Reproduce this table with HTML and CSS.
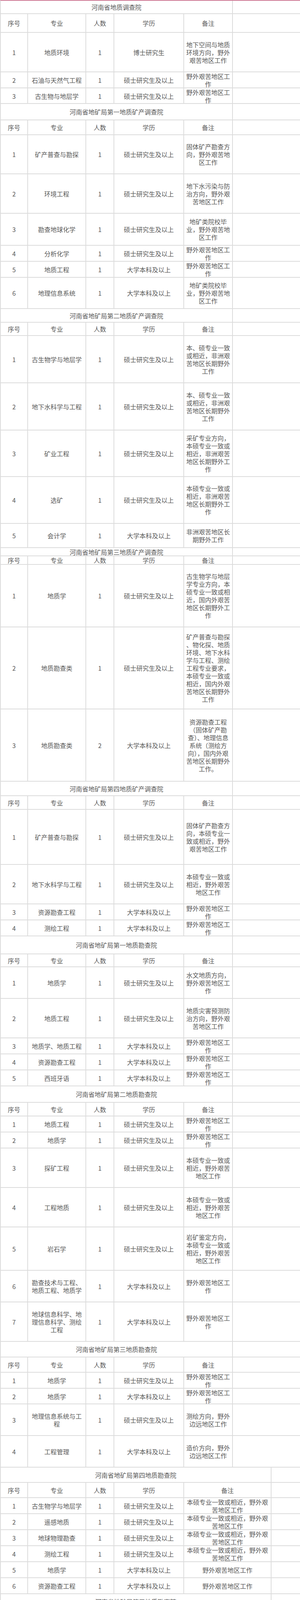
FILE: index.html
```html
<!DOCTYPE html>
<html lang="zh-CN">
<head>
<meta charset="utf-8">
<title>河南省地矿局招聘岗位</title>
<link rel="stylesheet" href="styles.css">
</head>
<body>
<div class="sheet">

<div class="row a h34"><div class="t">河南省地质调查院</div><div></div></div>
<div class="row a h48"><div>序号</div><div>专业</div><div>人数</div><div>学历</div><div>备注</div><div></div></div>
<div class="row a h101"><div>1</div><div>地质环境</div><div>1</div><div>博士研究生</div><div><span>地下空间与地质<br>环境方向，野外<br>艰苦地区工作</span></div><div></div></div>
<div class="row a h41"><div>2</div><div>石油与天然气工程</div><div>1</div><div>硕士研究生及以上</div><div><span>野外艰苦地区工<br>作</span></div><div></div></div>
<div class="row a h40"><div>3</div><div>古生物与地层学</div><div>1</div><div>硕士研究生及以上</div><div><span>野外艰苦地区工<br>作</span></div><div></div></div>

<div class="row a h42"><div class="t">河南省地矿局第一地质矿产调查院</div><div></div></div>
<div class="row a h38"><div>序号</div><div>专业</div><div>人数</div><div>学历</div><div>备注</div><div></div></div>
<div class="row a h100"><div>1</div><div>矿产普查与勘探</div><div>1</div><div>硕士研究生及以上</div><div><span>固体矿产勘查方<br>向，野外艰苦地<br>区工作</span></div><div></div></div>
<div class="row a h101"><div>2</div><div>环境工程</div><div>1</div><div>硕士研究生及以上</div><div><span>地下水污染与防<br>治方向，野外艰<br>苦地区工作</span></div><div></div></div>
<div class="row a h82"><div>3</div><div>勘查地球化学</div><div>1</div><div>硕士研究生及以上</div><div><span>地矿类院校毕<br>业，野外艰苦地<br>区工作</span></div><div></div></div>
<div class="row a h41"><div>4</div><div>分析化学</div><div>1</div><div>硕士研究生及以上</div><div><span>野外艰苦地区工<br>作</span></div><div></div></div>
<div class="row a h41"><div>5</div><div>地质工程</div><div>1</div><div>大学本科及以上</div><div><span>野外艰苦地区工<br>作</span></div><div></div></div>
<div class="row a h80"><div>6</div><div>地理信息系统</div><div>1</div><div>大学本科及以上</div><div><span>地矿类院校毕<br>业，野外艰苦地<br>区工作</span></div><div></div></div>

<div class="row a h35"><div class="t">河南省地矿局第二地质矿产调查院</div><div></div></div>
<div class="row a h34"><div>序号</div><div>专业</div><div>人数</div><div>学历</div><div>备注</div><div></div></div>
<div class="row a h121"><div>1</div><div>古生物学与地层学</div><div>1</div><div>硕士研究生及以上</div><div><span>本、硕专业一致<br>或相近，非洲艰<br>苦地区长期野外<br>工作</span></div><div></div></div>
<div class="row a h121"><div>2</div><div>地下水科学与工程</div><div>1</div><div>硕士研究生及以上</div><div><span>本、硕专业一致<br>或相近，非洲艰<br>苦地区长期野外<br>工作</span></div><div></div></div>
<div class="row a h119"><div>3</div><div>矿业工程</div><div>1</div><div>硕士研究生及以上</div><div><span>采矿专业方向，<br>本硕专业一致或<br>相近，非洲艰苦<br>地区长期野外工<br>作</span></div><div></div></div>
<div class="row a h120"><div>4</div><div>选矿</div><div>1</div><div>硕士研究生及以上</div><div><span>本硕专业一致或<br>相近，非洲艰苦<br>地区长期野外工<br>作</span></div><div></div></div>
<div class="row a h62"><div>5</div><div>会计学</div><div>1</div><div>大学本科及以上</div><div><span>非洲艰苦地区长<br>期野外工作</span></div><div></div></div>

<div class="row a h21"><div class="t">河南省地矿局第三地质矿产调查院</div><div></div></div>
<div class="row a h22"><div>序号</div><div>专业</div><div>人数</div><div>学历</div><div>备注</div><div></div></div>
<div class="row a h160"><div>1</div><div>地质学</div><div>1</div><div>硕士研究生及以上</div><div><span>古生物学与地层<br>学专业方向，本<br>硕专业一致或相<br>近，国内外艰苦<br>地区长期野外工<br>作</span></div><div></div></div>
<div class="row a h210"><div>2</div><div>地质勘查类</div><div>1</div><div>硕士研究生及以上</div><div><span>矿产普查与勘探<br>、物化探、地质<br>环境、地下水科<br>学与工程、测绘<br>工程专业要求，<br>本硕专业一致或<br>相近，国内外艰<br>苦地区长期野外<br>工作</span></div><div></div></div>
<div class="row a h185"><div>3</div><div>地质勘查类</div><div>2</div><div>大学本科及以上</div><div><span>资源勘查工程<br>（固体矿产勘<br>查）、地理信息<br>系统（测绘方<br>向），国内外艰<br>苦地区长期野外<br>工作。</span></div><div></div></div>

<div class="row a h37"><div class="t">河南省地矿局第四地质矿产调查院</div><div></div></div>
<div class="row a h35"><div>序号</div><div>专业</div><div>人数</div><div>学历</div><div>备注</div><div></div></div>
<div class="row a h141"><div>1</div><div>矿产普查与勘探</div><div>1</div><div>硕士研究生及以上</div><div><span>固体矿产勘查方<br>向，本硕专业一<br>致或相近，野外<br>艰苦地区工作</span></div><div></div></div>
<div class="row a h101"><div>2</div><div>地下水科学与工程</div><div>1</div><div>硕士研究生及以上</div><div><span>本硕专业一致或<br>相近，野外艰苦<br>地区工作</span></div><div></div></div>
<div class="row a h41"><div>3</div><div>资源勘查工程</div><div>1</div><div>大学本科及以上</div><div><span>野外艰苦地区工<br>作</span></div><div></div></div>
<div class="row a h41"><div>4</div><div>测绘工程</div><div>1</div><div>大学本科及以上</div><div><span>野外艰苦地区工<br>作</span></div><div></div></div>

<div class="row a h46"><div class="t">河南省地矿局第一地质勘查院</div><div></div></div>
<div class="row a h33"><div>序号</div><div>专业</div><div>人数</div><div>学历</div><div>备注</div><div></div></div>
<div class="row a h81"><div>1</div><div>地质学</div><div>1</div><div>硕士研究生及以上</div><div><span>水文地质方向，<br>野外艰苦地区工<br>作</span></div><div></div></div>
<div class="row a h101"><div>2</div><div>地质工程</div><div>1</div><div>硕士研究生及以上</div><div><span>地质灾害预测防<br>治方向，野外艰<br>苦地区工作</span></div><div></div></div>
<div class="row a h41"><div>3</div><div>地质学、地质工程</div><div>1</div><div>大学本科及以上</div><div><span>野外艰苦地区工<br>作</span></div><div></div></div>
<div class="row a h41"><div>4</div><div>资源勘查工程</div><div>1</div><div>大学本科及以上</div><div><span>野外艰苦地区工<br>作</span></div><div></div></div>
<div class="row a h41"><div>5</div><div>西班牙语</div><div>1</div><div>大学本科及以上</div><div><span>野外艰苦地区工<br>作</span></div><div></div></div>

<div class="row a h42"><div class="t">河南省地矿局第二地质勘查院</div><div></div></div>
<div class="row a h35"><div>序号</div><div>专业</div><div>人数</div><div>学历</div><div>备注</div><div></div></div>
<div class="row a h41"><div>1</div><div>地质工程</div><div>1</div><div>硕士研究生及以上</div><div><span>野外艰苦地区工<br>作</span></div><div></div></div>
<div class="row a h41"><div>2</div><div>地质学</div><div>1</div><div>硕士研究生及以上</div><div><span>野外艰苦地区工<br>作</span></div><div></div></div>
<div class="row a h101"><div>3</div><div>探矿工程</div><div>1</div><div>硕士研究生及以上</div><div><span>本硕专业一致或<br>相近，野外艰苦<br>地区工作</span></div><div></div></div>
<div class="row a h101"><div>4</div><div>工程地质</div><div>1</div><div>硕士研究生及以上</div><div><span>本硕专业一致或<br>相近，野外艰苦<br>地区工作</span></div><div></div></div>
<div class="row a h111"><div>5</div><div>岩石学</div><div>1</div><div>硕士研究生及以上</div><div><span>岩矿鉴定方向，<br>本硕专业一致或<br>相近，野外艰苦<br>地区工作</span></div><div></div></div>
<div class="row a h81"><div>6</div><div><span>勘查技术与工程、<br>地质工程、地质学</span></div><div>1</div><div>大学本科及以上</div><div><span>野外艰苦地区工<br>作</span></div><div></div></div>
<div class="row a h101"><div>7</div><div><span>地球信息科学、地<br>理信息科学、测绘<br>工程</span></div><div>1</div><div>大学本科及以上</div><div><span>野外艰苦地区工<br>作</span></div><div></div></div>

<div class="row a h40"><div class="t">河南省地矿局第三地质勘查院</div><div></div></div>
<div class="row a h39"><div>序号</div><div>专业</div><div>人数</div><div>学历</div><div>备注</div><div></div></div>
<div class="row a h41"><div>1</div><div>地质学</div><div>1</div><div>硕士研究生及以上</div><div><span>野外艰苦地区工<br>作</span></div><div></div></div>
<div class="row a h40"><div>2</div><div>地质学</div><div>1</div><div>大学本科及以上</div><div><span>野外艰苦地区工<br>作</span></div><div></div></div>
<div class="row a h81"><div>3</div><div><span>地理信息系统与工<br>程</span></div><div>1</div><div>硕士研究生及以上</div><div><span>测绘方向，野外<br>边远地区工作</span></div><div></div></div>
<div class="row a h81"><div>4</div><div>工程管理</div><div>1</div><div>大学本科及以上</div><div><span>造价方向，野外<br>边远地区工作</span></div><div></div></div>

<div class="row b h39"><div class="t">河南省地矿局第四地质勘查院</div><div></div></div>
<div class="row b h39"><div>序号</div><div>专业</div><div>人数</div><div>学历</div><div>备注</div><div></div></div>
<div class="row b h41"><div>1</div><div>古生物学与地层学</div><div>1</div><div>硕士研究生及以上</div><div><span>本硕专业一致或相近，野外艰<br>苦地区工作</span></div><div></div></div>
<div class="row b h41"><div>2</div><div>遥感地质</div><div>1</div><div>硕士研究生及以上</div><div><span>本硕专业一致或相近，野外艰<br>苦地区工作</span></div><div></div></div>
<div class="row b h41"><div>3</div><div>地球物理勘查</div><div>1</div><div>硕士研究生及以上</div><div><span>本硕专业一致或相近，野外艰<br>苦地区工作</span></div><div></div></div>
<div class="row b h41"><div>4</div><div>测绘工程</div><div>1</div><div>硕士研究生及以上</div><div><span>本硕专业一致或相近，野外艰<br>苦地区工作</span></div><div></div></div>
<div class="row b h41"><div>5</div><div>地质学</div><div>1</div><div>大学本科及以上</div><div>野外艰苦地区工作</div><div></div></div>
<div class="row b h41"><div>6</div><div>资源勘查工程</div><div>1</div><div>大学本科及以上</div><div>野外艰苦地区工作</div><div></div></div>

<div class="row b h39"><div class="t">河南省地矿局第五地质勘查院</div><div></div></div>
<div class="row b h40"><div>序号</div><div>专业</div><div>人数</div><div>学历</div><div>备注</div><div></div></div>
<div class="row b h82"><div>1</div><div><span>地球探测与信息技<br>术</span></div><div>1</div><div>硕士研究生及以上</div><div><span>电法勘探方向，本硕专业一致<br>或相近，野外艰苦地区工作</span></div><div></div></div>
<div class="row b h74"><div>2</div><div>测绘工程</div><div>1</div><div>硕士研究生及以上</div><div><span>矿区开采沉陷与土地复垦方<br>向，野外艰苦地区工作</span></div><div></div></div>
<div class="row b h128"><div>3</div><div>矿物加工工程</div><div>1</div><div>硕士研究生及以上</div><div><span>矿产综合利用方向或矿物加工<br>理论、工艺与设备方向，本硕<br>专业一致或相近，长期非洲尼<br>日利亚矿区工作</span></div><div></div></div>
<div class="row b h50"><div>4</div><div>地下水科学与工程</div><div>1</div><div>大学本科及以上</div><div>长期非洲尼日利亚矿区工作</div><div></div></div>
<div class="row b h72"><div>5</div><div>会计学</div><div>1</div><div>大学本科及以上</div><div><span>具有会计从业资格证，长期非<br>洲尼日利亚矿区工作</span></div><div></div></div>
<div class="row b h40"><div>6</div><div>汉语言文学</div><div>1</div><div>大学本科及以上</div><div>野外艰苦地区工作</div><div></div></div>

<div class="row b h35"><div class="t">河南省地矿局第一地质环境调查院</div><div></div></div>
<div class="row b h38"><div>序号</div><div>专业</div><div>人数</div><div>学历</div><div>备注</div><div></div></div>
<div class="row b h41"><div>1</div><div>地下水科学与工程</div><div>1</div><div>硕士研究生及以上</div><div><span>本、硕专业一致或相近，野外<br>艰苦地区工作</span></div><div></div></div>
<div class="row b h41"><div>2</div><div>古生物学与地层学</div><div>1</div><div>硕士研究生及以上</div><div>野外艰苦地区工作</div><div></div></div>
<div class="row b h41"><div>3</div><div>勘查技术与工程</div><div>1</div><div>大学本科及以上</div><div>野外艰苦地区工作</div><div></div></div>

<div class="row b h46"><div class="t">河南省地矿局第二地质环境调查院</div><div></div></div>
<div class="row b h41"><div>序号</div><div>专业</div><div>人数</div><div>学历</div><div>备注</div><div></div></div>
<div class="row b h67"><div>1</div><div>测绘工程</div><div>1</div><div>硕士研究生及以上</div><div><span>本、硕专业一致或相近，长期<br>野外边远艰苦地区工作</span></div><div></div></div>
<div class="row b h48"><div>2</div><div>地下水科学与工程</div><div>1</div><div>硕士研究生及以上</div><div><span>本、硕专业一致或相近，长期<br>野外边远艰苦地区工作</span></div><div></div></div>
<div class="row b h82"><div>3</div><div>水文地质学</div><div>1</div><div>硕士研究生及以上</div><div><span>地下水资源评价方向，本、硕<br>专业一致或相近，长期野外边<br>远艰苦地区工作</span></div><div></div></div>
<div class="row b h68"><div>4</div><div><span>环境工程与设计<br>(地学方向)</span></div><div>1</div><div>大学本科及以上</div><div>长期野外边远艰苦地区工作</div><div></div></div>
<div class="row b h40"><div>5</div><div>勘查技术与工程</div><div>1</div><div>大学本科及以上</div><div>长期野外边远艰苦地区工作</div><div></div></div>

<div class="row b h43"><div class="t">河南省地质科学研究所</div><div></div></div>
<div class="row b h37"><div>序号</div><div>专业</div><div>人数</div><div>学历</div><div>备注</div><div></div></div>
<div class="row b h40"><div>1</div><div>测绘工程</div><div>1</div><div>硕士研究生及以上</div><div>野外艰苦地区工作</div><div></div></div>

<div class="row b h46"><div class="t">河南省航空物探遥感中心</div><div></div></div>
<div class="row b h34"><div>序号</div><div>专业</div><div>人数</div><div>学历</div><div>备注</div><div></div></div>
<div class="row b h41"><div>1</div><div>物探、遥感、测绘</div><div>1</div><div>博士研究生</div><div>本硕博专业一致或相近</div><div></div></div>
<div class="row c h61"><div>2</div><div><span>地球物理、地球化<br>学</span></div><div>1</div><div>硕士研究生及以上</div><div>本硕专业一致或相近</div></div>
<div class="row c h40"><div>3</div><div>水利工程</div><div>1</div><div>硕士研究生及以上</div><div>矿山地质环境方向，本硕专业一致或相近</div></div>
<div class="row c h62"><div>4</div><div><span>地图学与地理信息<br>系统</span></div><div>1</div><div>硕士研究生及以上</div><div>本硕专业一致或相近</div></div>
<div class="row c h40"><div>5</div><div>测绘科学与技术</div><div>1</div><div>硕士研究生及以上</div><div>本硕专业一致或相近</div></div>
<div class="row c h41"><div>6</div><div>构造地质学</div><div>1</div><div>硕士研究生及以上</div><div>本硕专业一致或相近</div></div>
<div class="row c h42"><div>7</div><div>地质学、地质工程</div><div>1</div><div>大学本科及以上</div><div><span>长期野外艰苦地区工作，服务期不少于3<br>年</span></div></div>
<div class="row c h61"><div>8</div><div><span>地球信息科学与技<br>术</span></div><div>1</div><div>大学本科及以上</div><div><span>长期野外艰苦地区工作，服务期不少于3<br>年</span></div></div>

<div class="row c h46"><div class="t">河南省地矿局测绘地理信息院</div></div>
<div class="row c h44"><div>序号</div><div>专业</div><div>人数</div><div>学历</div><div>备注</div></div>
<div class="row c h41"><div>1</div><div>软件工程</div><div>1</div><div>博士研究生</div><div>软件开发方向，野外艰苦地区工作</div></div>
<div class="row c h41"><div>2</div><div>地质工程</div><div>1</div><div>硕士研究生及以上</div><div>野外艰苦地区工作</div></div>
<div class="row c h41"><div>3</div><div>环境科学</div><div>1</div><div>硕士研究生及以上</div><div>野外艰苦地区工作</div></div>
<div class="row c h56"><div>4</div><div>水文地质学</div><div>1</div><div>硕士研究生及以上</div><div><span>地下水流动及污染数值模拟技术方向，野<br>外艰苦地区工作</span></div></div>
<div class="row c h61"><div>5</div><div><span>地球信息科学与技<br>术</span></div><div>1</div><div>硕士研究生及以上</div><div>野外艰苦地区工作</div></div>
<div class="row c h120"><div>6</div><div><span>资源循环科学与工<br>程、地质工程、水<br>文与水资源工程</span></div><div>1</div><div>大学本科及以上</div><div>野外艰苦地区工作</div></div>

<div class="row c h39"><div class="t">河南省岩石矿物测试中心</div></div>
<div class="row c h36"><div>序号</div><div>专业</div><div>人数</div><div>学历</div><div>备注</div></div>
<div class="row c h87"><div>1</div><div>矿业工程</div><div>1</div><div>硕士研究生及以上</div><div><span>矿物加工工程方向、本硕专业一致或相<br>近，长期野外艰苦地区工作，服务期不少<br>于3年</span></div></div>
<div class="row c h54"><div>2</div><div>环境工程</div><div>1</div><div>硕士研究生及以上</div><div><span>本硕专业一致或相近，长期野外艰苦地区<br>工作，服务期不少于3年</span></div></div>
<div class="row c h41"><div>3</div><div>分析化学</div><div>1</div><div>大学本科及以上</div><div><span>长期野外艰苦地区工作，服务期不少于3<br>年</span></div></div>

<div class="row c h43"><div class="t">河南省地质环境勘查院</div></div>
<div class="row c h35"><div>序号</div><div>专业</div><div>人数</div><div>学历</div><div>备注</div></div>
<div class="row c h42"><div>1</div><div>地球化学勘查</div><div>1</div><div>博士研究生</div><div><span>长期野外艰苦地区工作，服务期不少于3<br>年</span></div></div>
<div class="row c h41"><div>2</div><div>城市规划设计</div><div>1</div><div>硕士研究生及以上</div><div><span>本科土地规划优先，长期野外艰苦地区工<br>作，服务期不少于3年</span></div></div>
<div class="row c h40"><div>3</div><div>测绘工程</div><div>1</div><div>硕士研究生及以上</div><div><span>本硕专业一致或相近，长期野外艰苦地区<br>工作，服务期不少于3年</span></div><span class="wm">微信号：</span></div>

</div>
</body>
</html>
```

FILE: styles.css
```css
html, body {
  margin: 0;
  padding: 0;
  background: #ffffff;
}

body {
  font-family: "Noto Sans CJK SC", "Noto Sans", "DejaVu Sans", sans-serif;
  font-size: 16px;
  line-height: 20px;
  color: #585858;
}

.sheet {
  width: 769px;
  box-sizing: border-box;
  border-top: 2px solid #cf7a96;
  border-left: 2px solid #dcdcdc;
}

.row {
  display: grid;
  box-sizing: border-box;
  border-bottom: 2px solid #dcdcdc;
  position: relative;
}

.a { grid-template-columns: 70px 149px 72px 179px 125px 1fr; }
.b { grid-template-columns: 70px 149px 72px 179px 224px 1fr; }
.c { grid-template-columns: 70px 149px 72px 179px 1fr; }

.row > div {
  display: flex;
  align-items: center;
  justify-content: center;
  text-align: center;
  white-space: nowrap;
  min-width: 0;
  padding: 0 3px;
  box-sizing: border-box;
  border-right: 2px solid #dcdcdc;
}

.row > div:last-of-type { border-right: 0; }

.a > .t, .b > .t { grid-column: 1 / 6; border-right: 2px solid #dcdcdc; }
.c > .t { grid-column: 1 / -1; }

.wm {
  position: absolute;
  left: 566px;
  top: 2px;
  font-size: 15px;
  color: rgba(120, 120, 120, 0.35);
  pointer-events: none;
}

.h21 { height: 21px; }
.h22 { height: 22px; }
.h33 { height: 33px; }
.h34 { height: 34px; }
.h35 { height: 35px; }
.h36 { height: 36px; }
.h37 { height: 37px; }
.h38 { height: 38px; }
.h39 { height: 39px; }
.h40 { height: 40px; }
.h41 { height: 41px; }
.h42 { height: 42px; }
.h43 { height: 43px; }
.h44 { height: 44px; }
.h46 { height: 46px; }
.h48 { height: 48px; }
.h50 { height: 50px; }
.h54 { height: 54px; }
.h56 { height: 56px; }
.h61 { height: 61px; }
.h62 { height: 62px; }
.h67 { height: 67px; }
.h68 { height: 68px; }
.h72 { height: 72px; }
.h74 { height: 74px; }
.h80 { height: 80px; }
.h81 { height: 81px; }
.h82 { height: 82px; }
.h87 { height: 87px; }
.h100 { height: 100px; }
.h101 { height: 101px; }
.h111 { height: 111px; }
.h119 { height: 119px; }
.h120 { height: 120px; }
.h121 { height: 121px; }
.h128 { height: 128px; }
.h141 { height: 141px; }
.h160 { height: 160px; }
.h185 { height: 185px; }
.h210 { height: 210px; }
```
